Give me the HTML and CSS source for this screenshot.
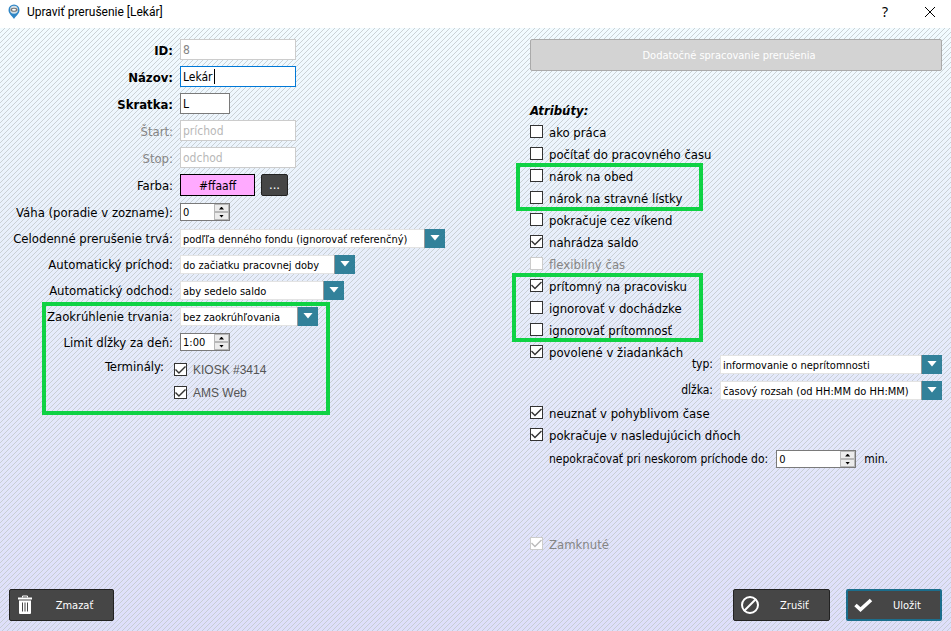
FILE: index.html
```html
<!DOCTYPE html>
<html lang="sk">
<head>
<meta charset="utf-8">
<title>Upraviť prerušenie [Lekár]</title>
<link rel="stylesheet" href="styles.css">
</head>
<body>
<header class="titlebar">
  <svg class="app-icon" viewBox="0 0 14 16" aria-hidden="true"><path d="M7 15C5.500 12 1.500 10 1.500 6a5.500 5.500 0 0 1 11 0c0 4-4 6-5.500 9z" fill="#2f86c6"/><circle cx="7" cy="5.800" r="4" fill="#d3dfe6"/><ellipse cx="7" cy="5.800" rx="3.500" ry="2" fill="#777"/><ellipse cx="7" cy="5.800" rx="2" ry="1" fill="#fff"/></svg>
  <h1 class="title">Upraviť prerušenie [Lekár]</h1>
  <button class="win-btn" type="button" aria-label="Pomocník">?</button>
  <button class="win-btn" type="button" aria-label="Zavrieť"><svg class="close-icon" viewBox="0 0 10 10"><path d="M0 0L10 10M10 0L0 10" stroke="#000" fill="none"/></svg></button>
</header>
<form class="dialog">
  <div class="columns">
    <div class="left">
      <div class="group basic">
        <div class="row"><label class="label strong" for="id">ID:</label><input class="text muted" id="id" value="8" disabled></div>
        <div class="row"><label class="label strong" for="name">Názov:</label><span class="caret-box"><input class="text active" id="name" value="Lekár"><span class="caret"></span></span></div>
        <div class="row"><label class="label strong" for="short">Skratka:</label><input class="text short" id="short" value="L"></div>
        <div class="row"><label class="label dim" for="start">Štart:</label><input class="text" id="start" placeholder="príchod" disabled></div>
        <div class="row"><label class="label dim" for="stop">Stop:</label><input class="text" id="stop" placeholder="odchod" disabled></div>
        <div class="row"><label class="label" for="color">Farba:</label><button class="color" id="color" type="button">#ffaaff</button><button class="more" type="button">...</button></div>
      </div>
      <div class="group">
        <div class="row"><label class="label" for="weight">Váha (poradie v zozname):</label><span class="spin"><input id="weight" value="0"><span class="steps"><button type="button" aria-label="Viac"></button><button class="down" type="button" aria-label="Menej"></button></span></span></div>
        <div class="row"><label class="label" for="fullday">Celodenné prerušenie trvá:</label><span class="combo w-xl"><select id="fullday"><option>podľľa denného fondu (ignorovať referenčný)</option></select></span></div>
        <div class="row"><label class="label" for="arrive">Automatický príchod:</label><span class="combo w-l"><select id="arrive"><option>do začiatku pracovnej doby</option></select></span></div>
        <div class="row"><label class="label" for="leave">Automatický odchod:</label><span class="combo w-m"><select id="leave"><option>aby sedelo saldo</option></select></span></div>
      </div>
      <div class="group marked marked-left">
        <div class="row"><label class="label" for="round">Zaokrúhlenie trvania:</label><span class="combo w-s"><select id="round"><option>bez zaokrúhľovania</option></select></span></div>
        <div class="row"><label class="label" for="limit">Limit dĺžky za deň:</label><span class="spin"><input id="limit" value="1:00"><span class="steps"><button type="button" aria-label="Viac"></button><button class="down" type="button" aria-label="Menej"></button></span></span></div>
        <div class="terminals"><span class="label">Terminály:</span>
          <div class="terminal-list">
            <label class="terminal"><input type="checkbox" checked>KIOSK #3414</label>
            <label class="terminal"><input type="checkbox" checked>AMS Web</label>
          </div>
        </div>
      </div>
    </div>
    <div class="right">
      <button class="extra" type="button" disabled>Dodatočné spracovanie prerušenia</button>
      <h2 class="heading">Atribúty:</h2>
      <label class="check"><input type="checkbox"><span>ako práca</span></label>
      <label class="check"><input type="checkbox"><span>počítať do pracovného času</span></label>
      <div class="marked marked-food">
        <label class="check"><input type="checkbox"><span>nárok na obed</span></label>
        <label class="check"><input type="checkbox"><span>nárok na stravné lístky</span></label>
      </div>
      <label class="check"><input type="checkbox"><span>pokračuje cez víkend</span></label>
      <label class="check"><input type="checkbox" checked><span>nahrádza saldo</span></label>
      <label class="check dim"><input type="checkbox" disabled><span>flexibilný čas</span></label>
      <div class="marked marked-presence">
        <label class="check"><input type="checkbox" checked><span>prítomný na pracovisku</span></label>
        <label class="check"><input type="checkbox"><span>ignorovať v dochádzke</span></label>
        <label class="check"><input type="checkbox"><span>ignorovať prítomnosť</span></label>
      </div>
      <label class="check"><input type="checkbox" checked><span>povolené v žiadankách</span></label>
      <div class="request">
        <div class="row end"><label for="type">typ:</label><span class="combo w-r"><select id="type"><option>informovanie o neprítomnosti</option></select></span></div>
        <div class="row end"><label for="length">dĺžka:</label><span class="combo w-r"><select id="length"><option>časový rozsah (od HH:MM do HH:MM)</option></select></span></div>
      </div>
      <label class="check"><input type="checkbox" checked><span>neuznať v pohyblivom čase</span></label>
      <label class="check"><input type="checkbox" checked><span>pokračuje v nasledujúcich dňoch</span></label>
      <div class="row late"><label for="late">nepokračovať pri neskorom príchode do:</label><span class="spin wide"><input id="late" value="0"><span class="steps"><button type="button" aria-label="Viac"></button><button class="down" type="button" aria-label="Menej"></button></span></span><span>min.</span></div>
      <label class="check dim locked"><input type="checkbox" checked disabled><span>Zamknuté</span></label>
    </div>
  </div>
  <footer class="footer">
    <button class="action delete" type="button"><svg viewBox="0 0 20 20"><path d="M7.500 2.500V1h5v1.500" fill="none" stroke="#fff"/><path d="M3 2.500h14v2H3zM4 5.500h12V18q0 1-1 1H5q-1 0-1-1z" fill="#fff"/><path d="M7.500 7.500v9M10 7.500v9M12.500 7.500v9" stroke="#464646" stroke-width="1"/></svg><span>Zmazať</span></button>
    <button class="action cancel" type="button"><svg viewBox="0 0 20 20"><circle cx="11" cy="10" r="8" fill="none" stroke="#fff" stroke-width="2"/><path d="M5 16L17 4" stroke="#fff" stroke-width="2"/></svg><span>Zrušiť</span></button>
    <button class="action save" type="submit"><svg viewBox="0 0 20 20"><path d="M2.500 10L7.500 14.500L18 5" fill="none" stroke="#fff" stroke-width="3.600"/></svg><span>Uložit</span></button>
  </footer>
</form>
</body>
</html>
```
FILE: styles.css
```css
*, *::before, *::after { box-sizing: border-box; }
body {
  margin: 0;
  min-height: 100vh;
  display: flex;
  flex-direction: column;
  font: 13px/16px "DejaVu Sans Condensed", "DejaVu Sans", sans-serif;
  color: #000;
}
button, input, select { font: inherit; margin: 0; padding: 0; }
.titlebar { display: flex; align-items: center; height: 28px; padding: 0 11px 4px 7px; background: #fff; }
.app-icon { width: 14px; height: 16px; margin-right: 6px; }
.title { flex: 1; margin: 0; font: 12px/16px Roboto, sans-serif; }
.win-btn { width: 20px; height: 20px; margin-left: 25px; border: 0; background: none; font: 14px/20px "Noto Sans", sans-serif; }
.close-icon { width: 10px; height: 10px; }
.dialog {
  flex: 1;
  display: flex;
  flex-direction: column;
  padding: 8px 9px 10px;
  background:
    url("data:image/svg+xml,%3Csvg xmlns='http://www.w3.org/2000/svg' width='5' height='5' shape-rendering='crispEdges'%3E%3Cpath d='M4 0h1v1h-1zM3 1h1v1h-1zM2 2h1v1h-1zM1 3h1v1h-1zM0 4h1v1h-1z' fill='%23c2c8cb' fill-opacity='.8'/%3E%3C/svg%3E"),
    linear-gradient(#f2fbff, #e8effb 35%, #dedffa);
}
.columns { display: grid; grid-template-columns: 521fr 412fr; }
.row { display: flex; align-items: center; height: 26px; }
.basic { margin-bottom: 1px; }
.basic .row { height: 27px; }
.label { width: 164px; margin-right: 7px; padding-top: 2px; text-align: right; flex: none; white-space: nowrap; }
.strong { font-weight: bold; }
.dim { color: #858585; }
.text { width: 116px; height: 21px; padding: 0 2px; border: 1px solid #7a7a7a; background: #fff; font-size: 12px; }
.text:disabled { border-color: #ccc; color: #848484; }
.text::placeholder { color: #b8b8b8; }
.text.active { border-color: #0078d7; outline: 0; }
.text.short { width: 50px; }
.caret-box { position: relative; display: flex; }
.caret { position: absolute; left: 34px; top: 3px; width: 1px; height: 15px; background: #000; }
.color { width: 75px; height: 22px; padding-top: 2px; border: 1px solid #000; background: #faf; font-size: 12px; }
.more { width: 27px; height: 22px; margin-left: 6px; border: 1px solid #222; border-radius: 2px; background: #464646; color: #fff; }
.spin { display: flex; width: 50px; height: 18px; border: 1px solid #7a7a7a; background: #fff; font: 11px/16px "DejaVu Sans Condensed", sans-serif; }
.spin input { flex: 1; min-width: 0; border: 0; padding: 2px 2px 0; background: none; }
.spin.wide { width: 80px; }
.steps { width: 15px; display: grid; grid-template-rows: 1fr 1fr; background: #f0f0f0; }
.steps button { display: grid; place-items: center; border: 1px solid #b8b8b8; background: #ececec; }
.steps button::before { content: ""; width: 5px; height: 3px; background: #000; clip-path: polygon(50% 0, 100% 100%, 0 100%); }
.steps .down::before { clip-path: polygon(0 0, 100% 0, 50% 100%); }
.combo { position: relative; display: flex; height: 19px; }
.combo::after { content: ""; position: absolute; inset: 0 0 0 auto; width: 21px; background: #32819a; border-left: 1px solid #999; pointer-events: none; }
.combo::before { content: ""; position: absolute; z-index: 1; right: 5px; top: 6px; width: 10px; height: 6px; background: #fff; clip-path: polygon(0 0, 100% 0, 50% 100%); pointer-events: none; }
.combo select { width: 100%; appearance: none; border: 1px solid #e3e3e3; border-radius: 0; padding: 2px 2px 0; background: #fff; color: #000; font: 11px/16px "DejaVu Sans Condensed", sans-serif; }
.w-xl { width: 265px; }
.w-l { width: 175px; }
.w-m { width: 164px; }
.w-s { width: 138px; }
.w-r { width: 222px; }
input[type="checkbox"] { appearance: none; flex: none; display: grid; width: 13px; height: 13px; border: 1px solid #333; background: #fff; }
input[type="checkbox"]:checked::before { content: ""; background: #333; clip-path: polygon(9% 45%, 36% 73%, 91% 18%, 100% 27%, 36% 91%, 0 55%); }
input[type="checkbox"]:disabled { border-color: #ccc; }
input[type="checkbox"]:disabled::before { background: #bbb; }
.marked { position: relative; }
.marked::after { content: ""; position: absolute; border: 4px solid #0fd244; pointer-events: none; }
.marked-left::after { left: 33px; width: 288px; top: -1px; bottom: -11px; }
.marked-food::after { left: -14px; width: 187px; top: -1px; bottom: -3px; }
.marked-presence::after { left: -18px; width: 191px; top: -1px; bottom: -2px; }
.terminals { display: flex; }
.terminals > .label { width: 155px; margin: 2px 10px 0 0; }
.terminal-list { padding-top: 3px; }
.terminal { display: flex; align-items: center; gap: 6px; height: 23px; color: #555; font: 12px/16px "Liberation Sans", sans-serif; }
.right { display: flex; flex-direction: column; padding-top: 3px; }
.extra { height: 32px; padding: 2px 14px 0 0; border: 1px solid #aaa; border-radius: 2px; background: #d3d3d3; color: #fff; font-size: 11px; }
.heading { margin: 32px 0 1px; font: italic bold 13px/16px "DejaVu Sans Condensed", sans-serif; }
.check { display: flex; align-items: center; gap: 6px; height: 22px; }
.check span { padding-top: 3px; }
.request { margin: -11px 0 -2px; font-size: 12px; }
.end { justify-content: flex-end; gap: 7px; }
.late { margin-top: 1px; padding-left: 19px; gap: 8px; font-size: 12px; }
.locked { margin-top: 60px; }
.footer { display: flex; margin-top: auto; }
.action { display: flex; align-items: center; height: 32px; padding: 0 5px; border: 1px solid #222; border-radius: 2px; background: #464646; color: #fff; font-size: 11px; }
.action svg { width: 20px; height: 20px; }
.action span { flex: 1; padding: 2px 0 0 6px; text-align: center; }
.delete { width: 105px; margin-right: auto; }
.cancel { width: 97px; margin-right: 16px; }
.save { width: 96px; border: 2px solid #1b6e8c; }
```
